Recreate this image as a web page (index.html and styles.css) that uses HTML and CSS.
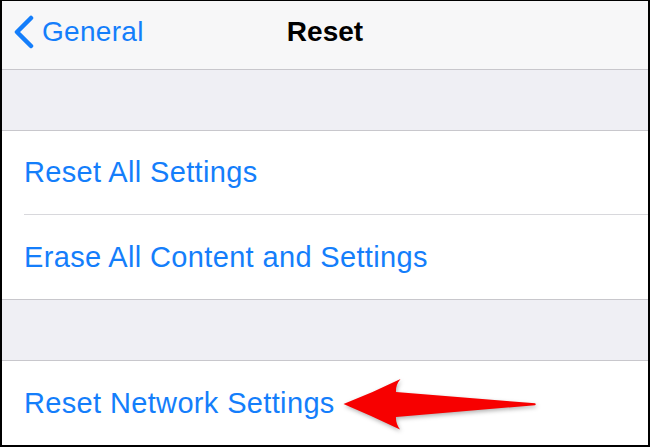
FILE: index.html
```html
<!DOCTYPE html>
<html lang="en">
<head>
    <meta charset="UTF-8">
    <meta name="viewport" content="width=device-width, initial-scale=1.0">
    <title>Reset</title>
    <link rel="stylesheet" href="styles.css">
</head>
<body>
    <div class="screen">
        <div class="navbar">
            <div class="back">
                <svg class="chevron" width="22" height="34" viewBox="0 0 22 34">
                    <path d="M18 3 L4 17 L18 31" fill="none" stroke="#147efb" stroke-width="4.5" stroke-linecap="round" stroke-linejoin="round"/>
                </svg>
                <span>General</span>
            </div>
            <div class="title">Reset</div>
            <div></div>
        </div>

        <div class="spacer"></div>

        <div class="group">
            <div class="cell"><span>Reset All Settings</span></div>
            <div class="cell"><span>Erase All Content and Settings</span></div>
        </div>

        <div class="spacer"></div>

        <div class="group last">
            <div class="cell"><span>Reset Network Settings</span></div>
            <!-- arrow pointing at the option -->
            <svg class="pointer" width="204" height="64" viewBox="338 372 204 64">
                <path d="M343.5 404 Q372 393 400.5 379 Q395.5 385 396 392 L535 403.3 Q536.5 404.3 535 405.2 L396 417 Q395.5 423 400 429.5 Q372 416 343.5 404 Z" fill="#f70000"/>
            </svg>
        </div>
    </div>
</body>
</html>
```

FILE: styles.css
```css
* {
    box-sizing: border-box;
}
body {
    margin: 0;
    font-family: "Liberation Sans", Arial, sans-serif;
    background: #000;
}
.screen {
    width: 650px;
    height: 447px;
    border-style: solid;
    border-color: #000;
    border-width: 1px 2px 2px 2px;
    background: #efeff4;
    overflow: hidden;
}
.navbar {
    height: 69px;
    background: #f7f7f8;
    border-bottom: 1px solid #c8c7cc;
    display: grid;
    grid-template-columns: 1fr auto 1fr;
    align-items: center;
    padding-bottom: 6px;
}
.back {
    display: flex;
    align-items: center;
    color: #147efb;
    font-size: 28px;
    letter-spacing: 0.3px;
    padding-left: 11px;
}
.chevron {
    margin-right: 7px;
}
.title {
    font-size: 28px;
    font-weight: bold;
    color: #000;
}
.spacer {
    height: 60px;
}
.group {
    background: #fff;
    border-top: 1px solid #c8c7cc;
    border-bottom: 1px solid #c8c7cc;
}
.group.last {
    border-bottom: none;
    position: relative;
}
.cell {
    margin-left: 22px;
    height: 84px;
    display: flex;
    align-items: center;
    color: #147efb;
    font-size: 29px;
    letter-spacing: 0.35px;
}
.cell:first-child {
    height: 83px;
}
.cell + .cell {
    border-top: 1px solid #d8d8dc;
    height: 85px;
}
.group.last .cell {
    height: 84px;
}
.pointer {
    position: absolute;
    left: 336px;
    top: 11px;
    filter: drop-shadow(1px 2px 2px rgba(0, 0, 0, 0.3));
}
```
